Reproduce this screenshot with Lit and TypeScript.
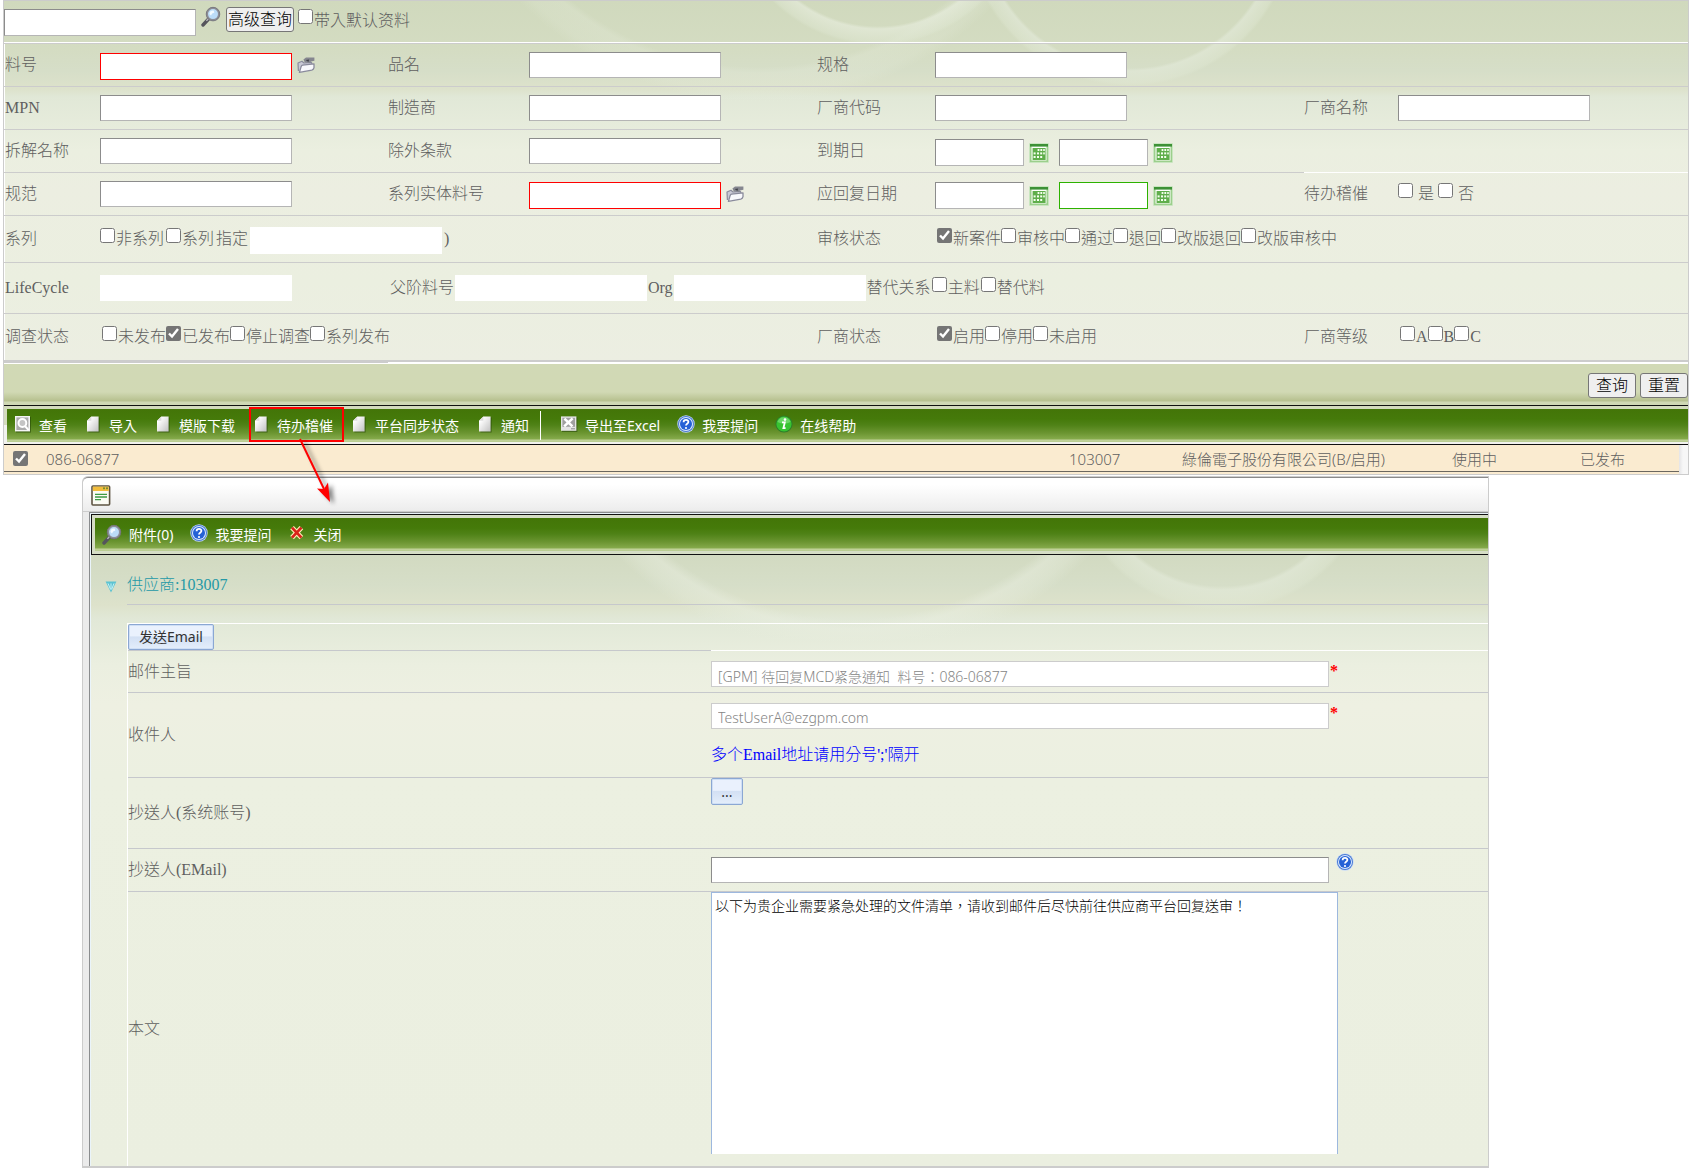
import { LitElement, html, css, svg, nothing } from "lit";
import { customElement } from "lit/decorators.js";
import { classMap } from "lit/directives/class-map.js";

type Check = { text: string; on?: boolean };

const magnifier = html`<svg class="lens" viewBox="0 0 20 20" aria-hidden="true">
  <path d="M8 12 L2 18.5" stroke="#55555c" stroke-width="3.4" stroke-linecap="round" />
  <path d="M7.6 12 L5.4 14.4" stroke="#b9b9bf" stroke-width="1.4" />
  <circle cx="12" cy="7.6" r="6" fill="#bcdcf8" stroke="#8d8d95" stroke-width="2" />
  <circle cx="12" cy="7.6" r="6.8" fill="none" stroke="#6d6d75" stroke-width="0.7" />
  <path d="M8.4 7.4 A3.8 3.8 0 0 1 12.6 4 L13.4 6 A4 4 0 0 0 10 9z" fill="#f3faff" />
</svg>`;

const folder = html`<svg class="folder" viewBox="0 0 18 18" aria-hidden="true">
  <path d="M1.4 15 L1 7 L5 5.2 L7 7 L14.4 6.4 L15.4 9" fill="#c9c9d6" stroke="#8a8b9c" stroke-width="1.2" stroke-linejoin="round" />
  <path d="M2.4 16.4 L4.2 10.4 Q4.6 9.4 5.6 9.2 L17 7.8 V11.6 Q16.6 13.6 14.8 14.2z" fill="#f8f8fc" stroke="#8a8b9c" stroke-width="1.3" stroke-linejoin="round" />
  <path d="M6.4 3.4 L9 1.6 L17.4 1.4 V4.8 L13.8 5.4 L13 7 L7.8 6.6z" fill="#85868f" />
  <path d="M8.6 4 L12.2 3.4 L11.4 6z" fill="#3f4048" />
</svg>`;

const calendar = html`<svg class="cal" viewBox="0 0 20 20" aria-hidden="true">
  <rect x="1.5" y="1.5" width="17" height="17" fill="#fdfffb" stroke="#9ccf8c" stroke-width="2" />
  <rect x="0.5" y="0.5" width="19" height="19" rx="1" fill="none" stroke="#c9e6c0" />
  <rect x="1" y="1" width="18" height="2.6" fill="#3d9136" />
  <rect x="3.6" y="5" width="13" height="12" fill="#5fae4b" />
  <g fill="#f6fff0">
    <rect x="8.6" y="6" width="1.8" height="2" /><rect x="11.4" y="6" width="1.8" height="2" /><rect x="14.2" y="6" width="1.6" height="2" />
    <rect x="4.6" y="9.4" width="2" height="2" /><rect x="8" y="9.4" width="2" height="2" /><rect x="11.2" y="9.4" width="2" height="2" /><rect x="14.2" y="9.4" width="1.6" height="2" />
    <rect x="4.6" y="13" width="2" height="2" /><rect x="8" y="13" width="2" height="2" /><rect x="11.2" y="13" width="2" height="2" />
  </g>
</svg>`;

const icon = (body: unknown) =>
  html`<svg class="ico" viewBox="0 0 18 18" aria-hidden="true">${body}</svg>`;

const viewIcon = icon(svg`
  <rect x="2" y="2" width="15" height="15.6" fill="#1f3d06" opacity=".5"/>
  <rect x="1" y="1" width="15" height="15.4" fill="#f4f4f4"/>
  <rect x="2.4" y="2.4" width="12" height="12.6" fill="#ababab"/>
  <circle cx="8.4" cy="8" r="3.9" fill="#c4c4c4" stroke="#fff" stroke-width="2"/>
  <path d="M11 11 L14.6 15.2" stroke="#fff" stroke-width="2"/>`);
const pageIcon = icon(svg`
  <linearGradient id="sheet" x1="0" y1="0" x2="1" y2="1">
    <stop offset=".2" stop-color="#fff"/><stop offset=".9" stop-color="#c9c9c9"/>
  </linearGradient>
  <path d="M8 2.6 H15.6 V17.4 H4.4 V6z" fill="#1f3d06" opacity=".55"/>
  <path d="M7.4 1.4 H14.6 V16.4 H3 V5.8z" fill="url(#sheet)"/>
  <path d="M7.4 1.4 V5.8 H3z" fill="#dedede"/>`);
const excelIcon = icon(svg`
  <rect x="2" y="2.4" width="15.4" height="14.6" fill="#1f3d06" opacity=".5"/>
  <rect x="1" y="1.4" width="15.4" height="14.4" fill="#e4e4e4"/>
  <rect x="2.4" y="2.8" width="12.6" height="9" fill="#a0a0a0"/>
  <path d="M4.4 3.6 L12.4 11.4 M12.6 3.4 L4.2 11.4" stroke="#fff" stroke-width="2.6"/>
  <path d="M11 13.8 H15" stroke="#8d8d8d"/>`);
const helpIcon = icon(svg`
  <circle cx="9" cy="9" r="8.7" fill="#c6dafa"/>
  <circle cx="9" cy="9" r="8" fill="#4a7ad0"/>
  <circle cx="9" cy="9" r="7" fill="#dbe9ff"/>
  <circle cx="9" cy="9" r="6" fill="#2561d6"/>
  <path d="M6.6 7.2 C6.6 4.2 11.6 4.2 11.4 7 C11.2 8.8 9 8.8 9 10.6" fill="none" stroke="#fff" stroke-width="1.8"/>
  <circle cx="9" cy="13" r="1.1" fill="#fff"/>`);
const infoIcon = icon(svg`
  <circle cx="9" cy="9" r="8.6" fill="#2f7d2a"/>
  <circle cx="9" cy="9" r="7.6" fill="#37c331"/>
  <path d="M2.4 7 A7 7 0 0 1 15.6 7 Q9 10 2.4 7z" fill="#7fe07a" opacity=".7"/>
  <circle cx="10" cy="4.6" r="1.3" fill="#fff"/>
  <path d="M7 7.4 H9.8 L8.4 13.2 H10.6" fill="none" stroke="#fff" stroke-width="1.8"/>`);
const closeIcon = icon(svg`
  <path d="M4 3.6 L13.4 13.6 M13.4 3.6 L4 13.6" stroke="#fff0b8" stroke-width="5"/>
  <path d="M4 3.6 L13.4 13.6 M13.4 3.6 L4 13.6" stroke="#d8231a" stroke-width="2.8"/>`);

@customElement("app-root")
export class AppRoot extends LitElement {
  static styles = css`
    :host {
      display: block;
      background: #fff;
      color: #5f5f5f;
      font: 300 16px/20px "Liberation Serif", "Noto Sans CJK TC", serif;
      --line: #ccc;
      --ui: "Noto Sans", "Noto Sans CJK TC", sans-serif;
    }
    * { box-sizing: border-box; }
    input, button, textarea { font: inherit; margin: 0; border-radius: 0; }
    svg { display: block; flex: none; }

    /* search panel */
    .search { margin: 0 2px 0 3px; border: 1px solid var(--line); border-bottom: 0; }
    .criteria {
      background:
        radial-gradient(circle at 874px -106px, transparent 131px, #e6ecdcaa 134px, #e0e8d466 147px, transparent 150px),
        radial-gradient(circle at 1126px -79px, transparent 146px, #e2e9d8aa 149px, #e0e8d466 161px, transparent 164px),
        radial-gradient(circle at 755px -232px, transparent 298px, #e6ecdc44 304px, #e6ecdc33 324px, transparent 334px),
        linear-gradient(#d0d9bd 0, #d4dcc2 48px, #d6dec8 70px, #dde2cb 88px, #e1e8d7 96px, #ebefe0 150px, #eceee1 190px, #ebefe0 280px, #eceee2 100%);
    }
    .quick {
      display: flex; align-items: flex-start; height: 43px; padding-top: 5px;
      border-bottom: 1px solid var(--line); box-shadow: inset 0 -1px #fff;
    }
    .quick .box { margin-top: 3px; }
    .quick .lens { margin: 0 5px; }
    .quick .native { margin-top: 1px; }
    .quick .check { margin: 3px 0 0 4px; }
    .row {
      display: grid; align-items: center; min-height: 43px; padding-left: 1px;
      grid-template-columns: 95px minmax(0, 288fr) 141px minmax(0, 288fr) 118px minmax(0, 369fr) 94px minmax(0, 290fr);
      border-bottom: 1px solid var(--line); box-shadow: inset 1px 0 #fff;
    }
    .row.series { min-height: 47px; }
    .row.cycle { min-height: 51px; }
    .row.status { min-height: 48px; border-bottom-width: 2px; }
    .name { white-space: nowrap; }
    .field { display: flex; align-items: center; white-space: nowrap; }
    .wide { grid-column: span 3; }
    .rest { grid-column: 3 / -1; gap: 1px; padding-left: 2px; }
    .inset { padding-left: 2px; }
    .whiteline { align-self: stretch; display: flex; align-items: center; box-shadow: 0 -1px #fff; }
    .box {
      width: 192px; height: 26px; padding: 0 4px; background: #fff; outline: 0;
      border: 1px solid; border-color: #8c8c8c #b5b5b5 #b5b5b5 #8c8c8c;
    }
    .tall { height: 27px; margin-top: 2px; }
    .must { border-color: #f00; }
    .focus { border-color: #2db200; }
    .plain { border: 0; }
    .date { width: 89px; }
    .folder { width: 18px; height: 18px; }
    .cal { width: 20px; height: 20px; }
    .lens { width: 20px; height: 21px; }
    .pick { padding: 0; border: 0; background: none; margin-left: 5px; }
    .date + .pick { margin-top: 4px; }
    .second { margin-left: 10px; }
    .check { display: inline-flex; align-items: center; white-space: nowrap; }
    .check input { width: 15px; height: 15px; margin: 0 1px 8px 0; accent-color: #757575; flex: none; }
    .spaced { gap: 4px; }
    .spaced .check { gap: 4px; }
    .gap { gap: 2px; }

    .native {
      height: 25px; padding: 0 7px; border: 1px solid #767676; border-radius: 3px;
      background: #efefef; color: #000; white-space: nowrap;
    }
    .native.slim { padding: 0 1px; }
    .actions {
      display: flex; justify-content: flex-end; gap: 4px; height: 43px; padding-top: 11px;
      background:
        linear-gradient(90deg, var(--line) 384px, #fff 0) 0 0 / 100% 1px no-repeat,
        linear-gradient(#fff, #fff) 0 1px / 100% 1px no-repeat,
        linear-gradient(#d1d9b6 0, #d1d9b4 30px, #b6c08e 39px, #cfd8b4 40px);
    }

    /* green tool bars */
    .strip { border: solid #111; border-width: 1px 0; padding: 3px 0 2px 3px; background: linear-gradient(#d3dbbd 50%, #f1f2ee 0); }
    .tools {
      display: flex; align-items: center; gap: 17px; height: 33px; padding: 0 7px;
      background: linear-gradient(#437508 0, #457a0a 10px, #4f8217 16px, #6b9531 24px, #85aa4b 30px, #c3d39c 31px, #b6cb8d);
      font: 14px/20px var(--ui);
    }
    .tool {
      display: inline-flex; align-items: center; gap: 7px; padding: 0; border: 0;
      position: relative; background: none; color: #fff; white-space: nowrap;
    }
    .ico { width: 18px; height: 18px; }
    .tool .ico { margin-bottom: 3px; }
    .bar { width: 1px; height: 29px; margin: 0 2px 0 -6px; background: #fff; }
    .mark { position: absolute; left: -3px; right: -11px; top: -8px; bottom: -6px; border: 2px solid #f00; z-index: 2; }
    .arrow { position: absolute; left: 47px; top: 24px; width: 48px; height: 66px; overflow: visible; z-index: 3; filter: drop-shadow(4px 2px 2px #0007); }

    .result { width: 100%; border-collapse: separate; border-spacing: 0; font: 300 15px/20px var(--ui); }
    .result td { padding: 1px 0 0; border-bottom: 1px solid #6b675f; white-space: nowrap; height: 27px; }
    .result .check { display: flex; padding-left: 9px; }
    .result .check input { margin: 0 0 1px; }
    .c1 { width: 42px; } .c3 { width: 113px; } .c4 { width: 270px; } .c5 { width: 128px; } .c6 { width: 99px; }
    .listing { padding-bottom: 2px; padding-right: 9px; border-bottom: 1px solid var(--line); background: linear-gradient(90deg, #faebd0 calc(100% - 9px), #e4e4e6 0, #f7f7f7 calc(100% - 5px)); }

    /* pop-up window */
    .popup { margin: 1px 202px 0 82px; background: #ebebeb; border: solid var(--line); border-width: 1px 1px 2px; border-top-left-radius: 6px; }
    .title {
      display: flex; align-items: flex-start; height: 35px; padding: 7px 0 0 8px; border-top-left-radius: 5px;
      border-top: 1px solid #8a8a8a; border-bottom: 1px solid var(--line);
      background: linear-gradient(#fff 20%, #ececec);
    }
    .title svg { width: 20px; height: 21px; }
    .frame { margin-left: 6px; border: solid #8a8c8e; border-width: 1px 0 0 1px; padding: 1px 0 0 1px; background: #eaf4fa; }
    .popup .strip { border-left-width: 1px; border-left-style: solid; padding-bottom: 3px; background: #d5ddc5; }
    .body {
      display: grid; grid-template-columns: 36px minmax(0, 1fr);
      background:
        radial-gradient(circle at 1131px -98px, transparent 129px, #e2e9d8aa 133px, #e0e8d466 150px, transparent 154px),
        radial-gradient(circle at 762px -232px, transparent 296px, #e9eee077 306px, #e6ecdc55 320px, transparent 332px),
        linear-gradient(#d2dac1 0, #d6dec8 30px, #dde2cb 50px, #e1e8d7 64px, #ebefe0 110px, #eef0e2 150px, #ecf0e1 220px, #ebefe0);
    }
    .fold { width: 12px; height: 12px; margin: 26px 0 0 14px; padding: 0; border: 0; background: none; }
    .supplier { margin: 0; height: 50px; padding-top: 20px; font: inherit; color: #2499a6; border-bottom: 1px solid #c6c8cc; }
    .mail { grid-column: 2; margin-top: 18px; border-top: 1px solid #fff; border-left: 1px solid #fff; }
    .send { height: 27px; background: linear-gradient(90deg, #c6c8cc 42.9%, #fff 0) 0 100% / 100% 1px no-repeat; }
    .blue {
      height: 26px; padding: 0 10px; border: 1px solid #8ba7d3; border-radius: 2px; color: #333;
      background: linear-gradient(#eaf1fd 45%, #d3e0f4 50%, #e4eefb); font: 14px/20px var(--ui); white-space: nowrap;
      box-shadow: inset 0 0 0 1px #cfdff5;
    }
    .more { padding: 0; width: 32px; height: 27px; }
    .line { display: grid; grid-template-columns: minmax(0, 583fr) minmax(0, 777fr); border-bottom: 1px solid #c6c8cc; }
    .line > label, .line > .name { align-self: center; }
    .line:last-child { border-bottom: 0; }
    .cell { padding: 10px 0 5px; }
    .pair { display: flex; align-items: flex-start; }
    .long { width: 618px; padding: 3px 6px 0; font: 300 14px/20px var(--ui); }
    .ro { border-color: var(--line); color: #858585; }
    .star { color: #f00; padding-left: 1px; font: bold 16px/20px "Liberation Serif", serif; }
    .tip { margin: 16px 0 7px; color: #00f; }
    .flush { padding: 0 0 43px; }
    .near { padding: 8px 0; }
    .near .pick { margin: -4px 0 0 7px; }
    .letter {
      display: block; width: 627px; height: 262px; padding: 3px; resize: none; outline: 0; overflow: hidden;
      border: 1px solid #9db8de; border-bottom: 0; background: #fff; color: #000; font: 300 14px/20px var(--ui);
    }
    .page { padding: 0 0 12px; }
  `;

  private check({ text, on }: Check) {
    return html`<label class="check"><input type="checkbox" .checked=${!!on} />${text}</label>`;
  }

  private box(id: string, name: string, must = false) {
    return html`<label class="name" for=${id}>${name}</label>
      <div class="field">
        <input id=${id} class=${classMap({ box: true, tall: must, must })} />
        ${must ? html`<button class="pick" aria-label=${name}>${folder}</button>` : nothing}
      </div>`;
  }

  private dates(id: string, name: string, focus = false) {
    return html`<label class="name" for=${id}>${name}</label>
      <div class="field">
        <input id=${id} class="box tall date" /><button class="pick" aria-label=${name}>${calendar}</button>
        <input class=${classMap({ box: true, tall: true, date: true, second: true, focus })} aria-label=${name} /><button class="pick" aria-label=${name}>${calendar}</button>
      </div>`;
  }

  private tool(pic: unknown, text: string, marked = false) {
    return html`<button class="tool">${pic}<span>${text}</span>${marked
      ? html`<i class="mark"></i><svg class="arrow" viewBox="0 0 48 66">
            <path d="M1 0 L25 50" stroke="#f00" stroke-width="2" />
            <path d="M31 63 L18 49.5 L25 50 L29 43.5z" fill="#f00" />
          </svg>`
      : nothing}</button>`;
  }

  render() {
    return html`
      <section class="search">
        <div class="criteria">
          <div class="quick">
            <input class="box tall" aria-label="查询" />${magnifier}
            <button class="native slim">高级查询</button>
            ${this.check({ text: "带入默认资料" })}
          </div>
          <div class="row">
            ${this.box("part", "料号", true)} ${this.box("product", "品名")} ${this.box("spec", "规格")}
          </div>
          <div class="row">
            ${this.box("mpn", "MPN")} ${this.box("maker", "制造商")} ${this.box("vcode", "厂商代码")} ${this.box("vname", "厂商名称")}
          </div>
          <div class="row">
            ${this.box("split", "拆解名称")} ${this.box("except", "除外条款")} ${this.dates("due", "到期日")}
          </div>
          <div class="row">
            ${this.box("norm", "规范")} ${this.box("entity", "系列实体料号", true)} ${this.dates("reply", "应回复日期", true)}
            <div class="name whiteline">待办稽催</div>
            <div class="field spaced whiteline">${[{ text: "是" }, { text: "否" }].map(this.check)}</div>
          </div>
          <div class="row series">
            <div class="name">系列</div>
            <div class="field wide gap">
              ${[{ text: "非系列" }, { text: "系列" }].map(this.check)}
              <label for="assign">指定</label>
              <input id="assign" class="box tall plain" /> )
            </div>
            <div class="name">审核状态</div>
            <div class="field wide inset">
              ${[{ text: "新案件", on: true }, { text: "审核中" }, { text: "通过" }, { text: "退回" }, { text: "改版退回" }, { text: "改版审核中" }].map(this.check)}
            </div>
          </div>
          <div class="row cycle">
            <label class="name" for="life">LifeCycle</label>
            <div class="field"><input id="life" class="box plain" /></div>
            <div class="field rest">
              <label for="parent">父阶料号</label><input id="parent" class="box plain" />
              <label for="org">Org</label><input id="org" class="box plain" />
              <span>替代关系</span>${[{ text: "主料" }, { text: "替代料" }].map(this.check)}
            </div>
          </div>
          <div class="row status">
            <div class="name">调查状态</div>
            <div class="field wide inset">
              ${[{ text: "未发布" }, { text: "已发布", on: true }, { text: "停止调查" }, { text: "系列发布" }].map(this.check)}
            </div>
            <div class="name">厂商状态</div>
            <div class="field inset">
              ${[{ text: "启用", on: true }, { text: "停用" }, { text: "未启用" }].map(this.check)}
            </div>
            <div class="name">厂商等级</div>
            <div class="field inset">${["A", "B", "C"].map((text) => this.check({ text }))}</div>
          </div>
        </div>
        <div class="actions">
          <button class="native">查询</button><button class="native">重置</button>
        </div>
        <div class="strip">
          <nav class="tools">
            ${this.tool(viewIcon, "查看")} ${this.tool(pageIcon, "导入")} ${this.tool(pageIcon, "模版下载")}
            ${this.tool(pageIcon, "待办稽催", true)} ${this.tool(pageIcon, "平台同步状态")} ${this.tool(pageIcon, "通知")}
            <i class="bar"></i>
            ${this.tool(excelIcon, "导出至Excel")} ${this.tool(helpIcon, "我要提问")} ${this.tool(infoIcon, "在线帮助")}
          </nav>
        </div>
        <div class="listing">
          <table class="result">
            <tr>
              <td class="c1"><label class="check"><input type="checkbox" checked aria-label="086-06877" /></label></td>
              <td>086-06877</td>
              <td class="c3">103007</td>
              <td class="c4">綠倫電子股份有限公司(B/启用)</td>
              <td class="c5">使用中</td>
              <td class="c6">已发布</td>
            </tr>
          </table>
        </div>
      </section>

      <section class="popup">
        <header class="title">
          <svg viewBox="0 0 20 21" aria-hidden="true">
            <rect x="1" y="1" width="17.6" height="19" rx="1" fill="#fbfbf4" stroke="#5e5442" stroke-width="1.6" />
            <rect x="1.8" y="1.6" width="16" height="4.4" fill="#f2bd3c" />
            <rect x="12" y="2.4" width="2" height="1.8" fill="#7c8f2d" /><rect x="15" y="2.4" width="2" height="1.8" fill="#7c8f2d" />
            <path d="M4 9.4 H16 M4 12 H16 M4 14.6 H10" stroke="#3f9a45" stroke-width="1.4" />
          </svg>
        </header>
        <div class="frame">
          <div class="strip">
            <nav class="tools">
              ${this.tool(magnifier, "附件(0)")} ${this.tool(helpIcon, "我要提问")} ${this.tool(closeIcon, "关闭")}
            </nav>
          </div>
          <div class="body">
            <button class="fold" aria-label="供应商">
              <svg width="12" height="12" viewBox="0 0 12 12">
                <path d="M.6 .6 H11.4 L6 11.6z" fill="#5cc3d2" />
                <path d="M3 2.4 L5.4 8 M6 2.4 V9 M9 2.4 L6.8 8" stroke="#c9f1f6" stroke-width="1" />
              </svg>
            </button>
            <h2 class="supplier">供应商:103007</h2>
            <form class="mail" @submit=${(e: Event) => e.preventDefault()}>
              <div class="send"><button class="blue">发送Email</button></div>
              <div class="line">
                <label for="subject">邮件主旨</label>
                <div class="cell pair">
                  <input id="subject" class="box long ro" readonly .value=${"[GPM] 待回复MCD紧急通知\u00a0 料号：086-06877"} /><span class="star">*</span>
                </div>
              </div>
              <div class="line">
                <label for="to">收件人</label>
                <div class="cell">
                  <div class="pair"><input id="to" class="box long ro" readonly value="TestUserA@ezgpm.com" /><span class="star">*</span></div>
                  <p class="tip">多个Email地址请用分号';'隔开</p>
                </div>
              </div>
              <div class="line">
                <div class="name">抄送人(系统账号)</div>
                <div class="flush pair"><button class="blue more" type="button">...</button></div>
              </div>
              <div class="line">
                <label for="cc">抄送人(EMail)</label>
                <div class="near pair"><input id="cc" class="box long" /><button class="pick" type="button" aria-label="抄送人">${helpIcon}</button></div>
              </div>
              <div class="line">
                <label for="letter">本文</label>
                <div class="page"><textarea id="letter" class="letter" .value=${"以下为贵企业需要紧急处理的文件清单，请收到邮件后尽快前往供应商平台回复送审！"}></textarea></div>
              </div>
            </form>
          </div>
        </div>
      </section>
    `;
  }
}
